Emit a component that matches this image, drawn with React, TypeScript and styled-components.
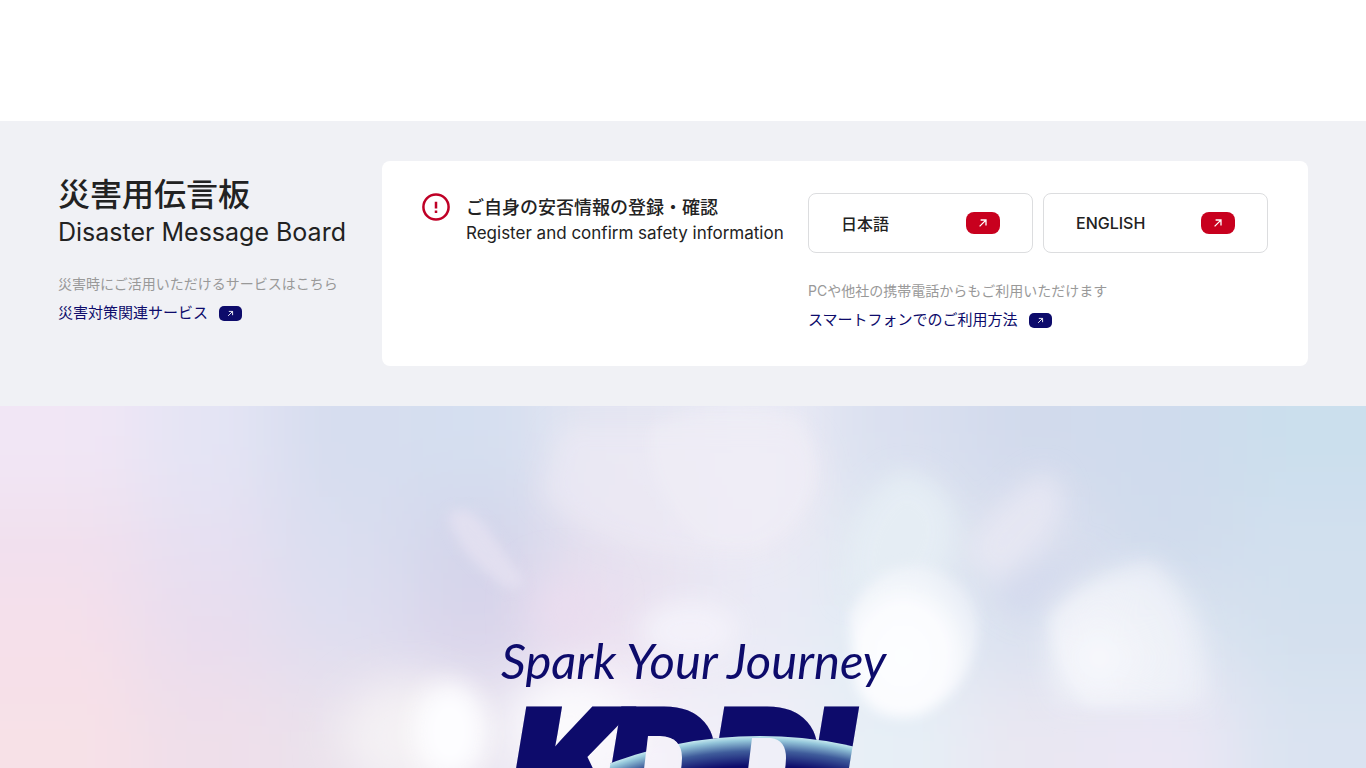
import React from "react";
import styled, { createGlobalStyle } from "styled-components";

const NAVY = "#0d0b6b";
const RED = "#c8001e";

const GlobalStyle = createGlobalStyle`
  *, *::before, *::after { box-sizing: border-box; }
  body {
    margin: 0;
    background: #fff;
    color: #222;
    font-family: Inter, "Noto Sans CJK JP", sans-serif;
  }
  h2, h3, p { margin: 0; font-weight: 400; }
`;

const Page = styled.div`
  display: flex;
  flex-direction: column;
  min-height: 100vh;
`;

const Header = styled.header`
  height: 121px;
  flex: none;
`;

const Board = styled.section`
  display: flex;
  flex: none;
  padding: 40px 58px;
  background: #f0f1f5;
`;

const Intro = styled.div`
  flex: 0 0 324px;
  padding-top: 12px;
`;

const Title = styled.h2`
  display: flex;
  flex-direction: column;
  margin-bottom: 26px;
`;

const TitleJa = styled.span`
  font-size: 32px;
  line-height: 44px;
  font-weight: 500;
`;

const TitleEn = styled.span`
  font-size: 25px;
  line-height: 30px;
`;

const Note = styled.p`
  color: #999;
  font-size: 14px;
  line-height: 22px;
`;

const TextLink = styled.a`
  display: inline-flex;
  align-items: center;
  gap: 11px;
  margin-top: 6px;
  color: ${NAVY};
  font-size: 15px;
  line-height: 24px;
  text-decoration: none;
`;

const Badge = styled.span<{ $large?: boolean }>`
  display: inline-flex;
  align-items: center;
  justify-content: center;
  width: ${(p) => (p.$large ? 34 : 23)}px;
  height: ${(p) => (p.$large ? 22 : 15)}px;
  border-radius: ${(p) => (p.$large ? 8 : 5)}px;
  background: ${(p) => (p.$large ? RED : NAVY)};
`;

const Card = styled.div`
  display: flex;
  flex: 1;
  justify-content: space-between;
  gap: 24px;
  min-height: 205px;
  padding: 32px 40px;
  border-radius: 8px;
  background: #fff;
`;

const Safety = styled.div`
  display: flex;
  align-items: flex-start;
  gap: 16px;
  white-space: nowrap;
`;

const SafetyTitle = styled.h3`
  display: flex;
  flex-direction: column;
`;

const SafetyJa = styled.span`
  font-size: 18px;
  line-height: 30px;
  font-weight: 500;
`;

const SafetyEn = styled.span`
  font-size: 17px;
  line-height: 20px;
`;

const Actions = styled.div`
  flex: 0 0 460px;
`;

const Languages = styled.div`
  display: flex;
  gap: 10px;
  margin-bottom: 27px;
`;

const LanguageLink = styled.a`
  display: flex;
  flex: 1;
  align-items: center;
  justify-content: space-between;
  height: 60px;
  padding: 0 32px;
  border: 1px solid #dcdddf;
  border-radius: 8px;
  color: #222;
  font-size: 16px;
  font-weight: 500;
  text-decoration: none;
`;

const Hero = styled.section`
  position: relative;
  flex: 1 0 360px;
  display: flex;
  justify-content: center;
  overflow: hidden;
  background: #e6e7f4;
`;

const Backdrop = styled.svg`
  position: absolute;
  inset: 0;
  width: 100%;
  height: 100%;
`;

const Brand = styled.svg`
  position: relative;
  flex: none;
  width: 440px;
  height: 460px;
`;

const Arrow = ({ size }: { size: number }) => (
  <svg width={size} height={size} viewBox="0 0 10 10" fill="none" stroke="#fff" strokeWidth="1.3" aria-hidden="true">
    <path d="M1.6 8.4 7.9 2.1M2.6 2H8V7.4" />
  </svg>
);

const AlertIcon = () => (
  <svg width="28" height="28" viewBox="0 0 28 28" fill="none" aria-hidden="true">
    <circle cx="14" cy="14" r="12.6" stroke="#bf0026" strokeWidth="2.5" />
    <path d="M14 8.8v6.6M14 17.6v2.5" stroke="#bf0026" strokeWidth="2.5" />
  </svg>
);

/* Colour field of the backdrop, blurred into a smooth wash. */
const WASH = [
  ["#f1e6f5", "#e4e4f4", "#d6ddef", "#d5dff0", "#e4e5f2", "#ebebf5", "#dae0f0", "#d2daec", "#cfdbed", "#cbdfed"],
  ["#f1e0ee", "#e6e0f2", "#dadef0", "#d3d5ea", "#e6e1f0", "#eae9f4", "#e0e8f2", "#dce0ef", "#d0dbec", "#d2e0ee"],
  ["#f5e0ea", "#e9ddee", "#dfdef0", "#d9d4ea", "#ebe0f0", "#e9eaf5", "#e2ecf5", "#dae1f0", "#dce4f1", "#d3e0ee"],
  ["#f7e1e7", "#efdfea", "#eae2ec", "#e9e5f1", "#f6f3fa", "#f0eff8", "#e6eff6", "#e9e7f2", "#ebe7f4", "#dae3f1"],
];
const CELL_W = 137;
const CELL_H = 91;

const HeroBackdrop = () => (
  <Backdrop viewBox="0 0 1366 362" preserveAspectRatio="none" aria-hidden="true">
    <defs>
      <filter id="wash" filterUnits="userSpaceOnUse" x="-150" y="-150" width="1666" height="662"><feGaussianBlur stdDeviation="38" /></filter>
      <filter id="haze" x="-60%" y="-60%" width="220%" height="220%"><feGaussianBlur stdDeviation="22" /></filter>
      <filter id="soft" x="-40%" y="-40%" width="180%" height="180%"><feGaussianBlur stdDeviation="13" /></filter>
      <filter id="edge" x="-30%" y="-30%" width="160%" height="160%"><feGaussianBlur stdDeviation="6" /></filter>
      <radialGradient id="flareLeft" cx="0.42" cy="0.6" r="0.6">
        <stop offset="0" stopColor="#fdfeff" />
        <stop offset="0.55" stopColor="#fbfcfe" />
        <stop offset="1" stopColor="#f3f5fb" stopOpacity="0.5" />
      </radialGradient>
      <radialGradient id="flareRight" cx="0.35" cy="0.65" r="0.65">
        <stop offset="0" stopColor="#f9f9fd" />
        <stop offset="1" stopColor="#edf0f8" stopOpacity="0.4" />
      </radialGradient>
    </defs>
    <g filter="url(#wash)">
      {WASH.map((row, r) =>
        row.map((fill, c) => {
          const left = c === 0 ? -150 : c * CELL_W;
          const right = c === row.length - 1 ? 1516 : (c + 1) * CELL_W;
          const top = r === 0 ? -150 : r * CELL_H;
          const bottom = r === WASH.length - 1 ? 512 : (r + 1) * CELL_H;
          return <rect key={`${r}-${c}`} x={left} y={top} width={right - left + 1} height={bottom - top + 1} fill={fill} />;
        })
      )}
    </g>
    <g filter="url(#haze)">
      <ellipse cx="410" cy="330" rx="70" ry="55" fill="#f4f1f4" />
      <ellipse cx="570" cy="320" rx="60" ry="50" fill="#fbfafd" />
      <ellipse cx="565" cy="205" rx="32" ry="34" fill="#ebddef" />
    </g>
    <g filter="url(#soft)">
      <path d="M560 20H800Q835 60 815 100Q780 165 720 155Q600 150 540 90Z" fill="#eeebf5" opacity=".6" />
      <path d="M850 130Q870 75 905 65Q970 85 950 150L930 190H845Z" fill="#e5edf4" />
      <path d="M965 150Q985 100 1045 65Q1080 90 1050 130L1000 175Z" fill="#e8e9f4" opacity=".8" />
      <ellipse cx="690" cy="225" rx="50" ry="30" fill="#f3f1f9" />
      <path d="M990 190Q1020 160 1080 145L1100 150Q1050 175 1030 215Z" fill="#d4daed" />
      <path d="M1055 205Q1090 165 1150 155Q1210 190 1205 298H1060Q1035 255 1055 205Z" fill="#f0f2f9" opacity=".8" />
      <ellipse cx="450" cy="325" rx="36" ry="48" fill="#fdfdff" />
    </g>
    <g filter="url(#edge)">
      <path d="M650 20Q700 -5 800 10Q830 60 805 100Q770 160 700 135Q640 80 650 20Z" fill="#f2f0f8" opacity=".4" />
      <path d="M448 110Q465 90 490 125L525 175Q515 190 500 178Q455 145 448 110Z" fill="#e5e2f2" opacity=".75" />
      <path d="M848 208Q870 160 920 158Q975 170 980 220Q975 285 920 310Q870 320 855 280Z" fill="url(#flareLeft)" />
      <path d="M1050 210Q1085 170 1150 158Q1195 200 1190 302H1085Q1050 260 1050 210Z" fill="url(#flareRight)" opacity=".8" />
    </g>
  </Backdrop>
);

const BrandMark = () => (
  <Brand viewBox="0 0 440 460" role="img" aria-label="KDDI Spark Your Journey">
    <defs>
      <clipPath id="globeBounds">
        <path d="M155 300H394L376 420H139Z" />
      </clipPath>
      <mask id="letters" maskUnits="userSpaceOnUse" x="0" y="280" width="440" height="180">
        <circle cx="297" cy="757" r="427" fill="#fff" clipPath="url(#globeBounds)" />
        <text x="47 142 245 345" y="413" fill="#fff" stroke="#fff" strokeWidth="5" fontFamily="Inter" fontSize="151" fontWeight="900" fontStyle="italic">KDDI</text>
        <path d="M185 330H197Q219 331 219 352Q218 380 206 388H178Z" fill="#000" />
        <path d="M289 332H308Q323 334 323 352Q322 380 310 388H282Z" fill="#000" />
      </mask>
      <radialGradient id="globe" gradientUnits="userSpaceOnUse" cx="297" cy="757" r="427">
        <stop offset="0.93" stopColor={NAVY} />
        <stop offset="0.965" stopColor="#3f5c9b" />
        <stop offset="0.99" stopColor="#94c6da" />
        <stop offset="1" stopColor="#c4e8ef" />
      </radialGradient>
    </defs>
    <text x="38" y="273" fill={NAVY} fontFamily="Lato" fontSize="49" fontStyle="italic">Spark Your Journey</text>
    <g mask="url(#letters)">
      <rect x="0" y="280" width="440" height="180" fill={NAVY} />
      <circle cx="297" cy="757" r="427" fill="url(#globe)" />
    </g>
  </Brand>
);

export default function App() {
  return (
    <>
      <GlobalStyle />
      <Page lang="ja">
        <Header />
        <Board>
          <Intro>
            <Title>
              <TitleJa>災害用伝言板</TitleJa>
              <TitleEn>Disaster Message Board</TitleEn>
            </Title>
            <Note>災害時にご活用いただけるサービスはこちら</Note>
            <TextLink href="#services">
              災害対策関連サービス
              <Badge><Arrow size={7} /></Badge>
            </TextLink>
          </Intro>
          <Card>
            <Safety>
              <AlertIcon />
              <SafetyTitle>
                <SafetyJa>ご自身の安否情報の登録・確認</SafetyJa>
                <SafetyEn>Register and confirm safety information</SafetyEn>
              </SafetyTitle>
            </Safety>
            <Actions>
              <Languages>
                <LanguageLink href="#ja">日本語<Badge $large><Arrow size={10} /></Badge></LanguageLink>
                <LanguageLink href="#en">ENGLISH<Badge $large><Arrow size={10} /></Badge></LanguageLink>
              </Languages>
              <Note>PCや他社の携帯電話からもご利用いただけます</Note>
              <TextLink href="#smartphone">
                スマートフォンでのご利用方法
                <Badge><Arrow size={7} /></Badge>
              </TextLink>
            </Actions>
          </Card>
        </Board>
        <Hero>
          <HeroBackdrop />
          <BrandMark />
        </Hero>
      </Page>
    </>
  );
}
